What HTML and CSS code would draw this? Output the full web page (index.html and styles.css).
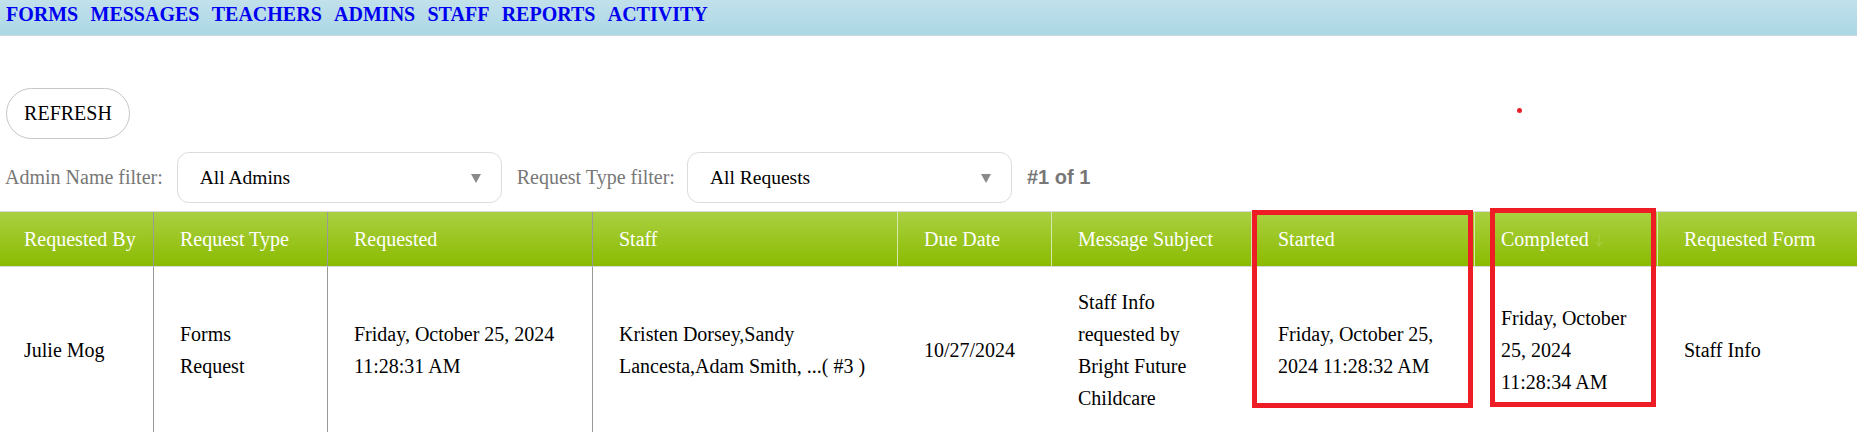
FILE: index.html
```html
<!DOCTYPE html>
<html lang="en">
<head>
  <meta charset="UTF-8">
  <title>Requests</title>
  <link rel="stylesheet" href="styles.css">
</head>
<body>
  <div class="topnav">
    <a href="#">FORMS</a>
    <a href="#">MESSAGES</a>
    <a href="#">TEACHERS</a>
    <a href="#">ADMINS</a>
    <a href="#">STAFF</a>
    <a href="#">REPORTS</a>
    <a href="#">ACTIVITY</a>
  </div>

  <div class="toolbar">
    <button class="refresh-btn">REFRESH</button>
  </div>

  <div class="filters">
    <label class="filter-label" for="adminFilter">Admin Name filter:</label>
    <div class="select-box">
      <select id="adminFilter"><option>All Admins</option></select>
    </div>
    <label class="filter-label" for="typeFilter">Request Type filter:</label>
    <div class="select-box">
      <select id="typeFilter"><option>All Requests</option></select>
    </div>
    <span class="counter">#1 of 1</span>
  </div>

  <div class="grid-wrap">
    <table class="grid">
      <colgroup>
        <col class="w-by"><col class="w-type"><col class="w-req"><col class="w-staff"><col class="w-due">
        <col class="w-subj"><col class="w-start"><col class="w-done"><col class="w-form">
      </colgroup>
      <thead>
        <tr>
          <th class="dark">Requested By</th>
          <th class="dark">Request Type</th>
          <th class="dark">Requested</th>
          <th>Staff</th>
          <th>Due Date</th>
          <th>Message Subject</th>
          <th>Started</th>
          <th>Completed <svg class="sort-arrow" width="8" height="13" viewBox="0 0 8 13"><path d="M4 0v11M1 8l3 4 3-4" fill="none" stroke="currentColor" stroke-width="1.3"/></svg></th>
          <th>Requested Form</th>
        </tr>
      </thead>
      <tbody>
        <tr>
          <td class="dark">Julie Mog</td>
          <td class="dark">Forms Request</td>
          <td class="dark">Friday, October 25, 2024 11:28:31 AM</td>
          <td>Kristen Dorsey,Sandy Lancesta,Adam Smith, ...( #3 )</td>
          <td>10/27/2024</td>
          <td>Staff Info requested by Bright Future Childcare</td>
          <td>Friday, October 25, 2024 11:28:32 AM</td>
          <td>Friday, October 25, 2024 11:28:34 AM</td>
          <td>Staff Info</td>
        </tr>
      </tbody>
    </table>
    <!-- highlight boxes drawn over the grid -->
    <div class="mark mark-started"></div>
    <div class="mark mark-done"></div>
  </div>

  <div class="red-dot"></div>
</body>
</html>
```

FILE: styles.css
```css
body { margin:0; font-family:"Liberation Serif","Times New Roman",serif; font-size:20px; color:#000; background:#fff; }
.topnav { display:flex; gap:12.3px; height:36px; box-sizing:border-box; padding:3px 6px 0; background:linear-gradient(#c1e1eb,#acd7e5); border-bottom:1px solid #c9d9de; }
.topnav a { color:#0000f0; font-weight:700; font-size:20px; text-decoration:none; line-height:23px; }

.toolbar { padding:52px 6px 0; }
.refresh-btn { height:51px; width:124px; padding:0; background:#fff; border:1px solid #c6c6c6; border-radius:26px; font-family:"Liberation Serif",serif; font-size:20px; color:#000; }

.filters { display:flex; align-items:center; padding:13px 0 0 5px; height:51px; }
.filter-label { color:#777; font-size:20px; margin-right:14px; white-space:nowrap; }
.select-box { position:relative; width:325px; height:51px; margin-right:15px; flex:none; }
.select-box select { appearance:none; -webkit-appearance:none; width:100%; height:100%; padding:0 40px 0 22px; background:#fff; border:1px solid #dcdcdc; border-radius:12px; font-family:"Liberation Serif",serif; font-size:19.5px; color:#000; }
.select-box::after { content:""; position:absolute; right:21px; top:22px; border-left:5px solid transparent; border-right:5px solid transparent; border-top:9px solid #8a8a8a; pointer-events:none; }
.filters .select-box + .filter-label { margin-right:12px; }
.counter { font-family:"Liberation Sans",Arial,sans-serif; font-weight:700; font-size:20px; color:#777; }

.grid-wrap { position:relative; margin-top:8px; }
.grid { width:100%; table-layout:fixed; border-collapse:separate; border-spacing:0; border-top:1px solid #d9d9d9; }
.w-by { width:154px; } .w-type { width:174px; } .w-req { width:265px; } .w-staff { width:305px; } .w-due { width:154px; }
.w-subj { width:200px; } .w-start { width:223px; } .w-done { width:183px; } .w-form { width:199px; }
.grid th { height:55px; box-sizing:border-box; padding:0 28px 0 26px; text-align:left; font-weight:400; color:#fff; line-height:32px; background:linear-gradient(#aad042,#8bbb00); border-right:1px solid #d6e8ae; border-bottom:1px solid #d9d9d9; white-space:nowrap; }
.grid th:last-child { border-right:0; }
.grid th.dark { border-right-color:#9a9a9a; }
.grid td { padding:19px 28px 18px 26px; line-height:32px; vertical-align:middle; border-right:1px solid #fff; }
.grid td.dark { border-right-color:#999; }
.grid th:first-child, .grid td:first-child { padding-left:24px; }
.sort-arrow { color:#a5cd3c; vertical-align:-1px; margin-left:1px; }

.mark { position:absolute; border:5px solid #ee1d25; box-sizing:border-box; pointer-events:none; }
.mark-started { left:1252px; top:-1px; width:221px; height:198px; }
.mark-done { left:1490px; top:-3px; width:166px; height:199px; }
.red-dot { position:absolute; left:1517px; top:108px; width:5px; height:5px; border-radius:50%; background:#e8202a; }
```
